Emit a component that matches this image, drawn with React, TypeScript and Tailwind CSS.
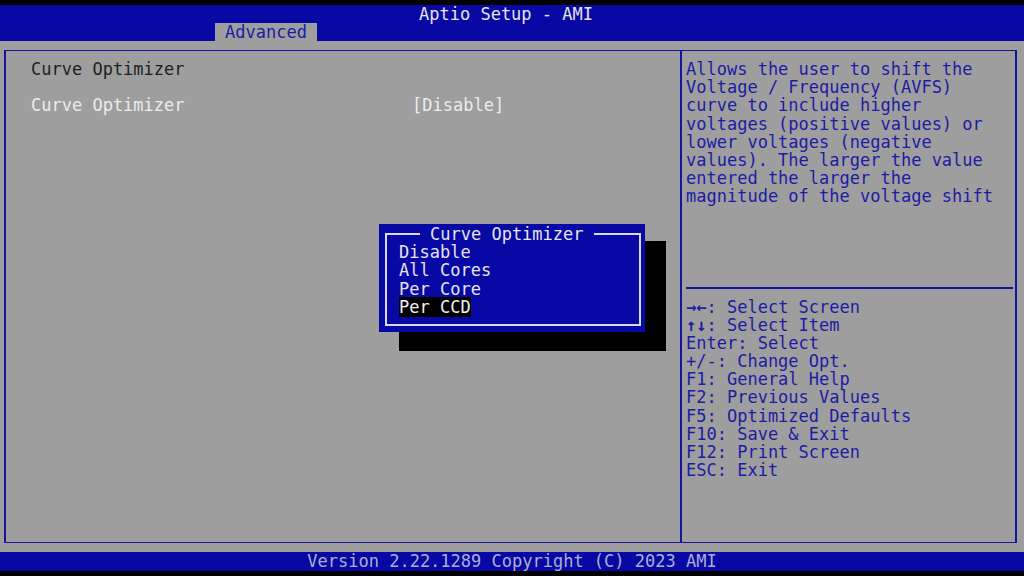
import React from "react";

const mono = { fontFamily: '"DejaVu Sans Mono", "Liberation Mono", monospace' };

const help = [
  "Allows the user to shift the",
  "Voltage / Frequency (AVFS)",
  "curve to include higher",
  "voltages (positive values) or",
  "lower voltages (negative",
  "values). The larger the value",
  "entered the larger the",
  "magnitude of the voltage shift",
];

const keys = [
  "Enter: Select",
  "+/-: Change Opt.",
  "F1: General Help",
  "F2: Previous Values",
  "F5: Optimized Defaults",
  "F10: Save & Exit",
  "F12: Print Screen",
  "ESC: Exit",
];

export default function App() {
  return (
    <div
      className="w-[1024px] h-[576px] bg-black flex flex-col overflow-hidden text-[17px] leading-[18.2px] relative"
      style={mono}
    >
      <div className="h-[5px] bg-black" />
      <div className="h-[36px] bg-[#0808a4] flex flex-col">
        <div className="h-[18px] flex justify-center pr-[12px] text-[#e4e4ec] leading-[18px]">
          Aptio Setup - AMI
        </div>
        <div className="flex-1 flex items-end pl-[215px]">
          <div className="w-[102px] h-[18px] bg-[#9e9e9e] text-[#1c1ca4] flex justify-center leading-[18px]">
            Advanced
          </div>
        </div>
      </div>
      <div className="flex-1 bg-[#9e9e9e] pt-[9px] pb-[9px] pl-[4px] pr-[7px] flex">
        <div className="flex-1 flex border-x-2 border-y border-[#1414a0]">
          <div className="w-[674px] pt-[9px] pl-[25px] pr-[4px] flex flex-col">
            <div className="text-[#1e1e1e] h-[18.2px]">Curve Optimizer</div>
            <div className="h-[18.2px]" />
            <div className="flex h-[18.2px] text-[#ececec]">
              <span className="w-[381px]">Curve Optimizer</span>
              <span>[Disable]</span>
            </div>
          </div>
          <div className="w-[2px] bg-[#1414a0]" />
          <div className="flex-1 pt-[9px] pl-[4px] pr-[2px] flex flex-col text-[#1c1ca4]">
            <div className="h-[226px] flex flex-col">
              {help.map((l) => (
                <div key={l} className="h-[18.2px] whitespace-pre">{l}</div>
              ))}
            </div>
            <div className="h-[1.5px] bg-[#1414a0] mt-[1px] mb-[9px]" />
            <div className="flex flex-col">
              <div className="h-[18.2px] whitespace-pre">
                <span className="font-bold">→←</span>: Select Screen
              </div>
              <div className="h-[18.2px] whitespace-pre">
                <span className="font-bold">↑↓</span>: Select Item
              </div>
              {keys.map((l) => (
                <div key={l} className="h-[18.2px] whitespace-pre">{l}</div>
              ))}
            </div>
          </div>
        </div>
      </div>
      <div className="h-[19px] bg-[#0808a4] text-[#aeaed2] flex justify-center items-center leading-[19px]">
        Version 2.22.1289 Copyright (C) 2023 AMI
      </div>
      <div className="h-[5px] bg-black" />

      {/* popup shadow */}
      <div className="absolute left-[399px] top-[241px] w-[267px] h-[110px] bg-black" />
      {/* popup */}
      <div className="absolute left-[379px] top-[224px] w-[266px] h-[108px] bg-[#0808a4] pt-[10px] pl-[6px] pr-[4px] pb-[6px] flex">
        <div className="flex-1 border-x-2 border-b-2 border-[#d8d8e8] relative flex flex-col">
          <div className="flex items-center -mt-[9px] h-[18.2px] text-[#e4e4ec]">
            <div className="w-[35px] h-[2px] bg-[#d8d8e8] -ml-[2px]" />
            <span className="px-[10px]">Curve Optimizer</span>
            <div className="flex-1 h-[2px] bg-[#d8d8e8] -mr-[2px]" />
          </div>
          <div className="pl-[12px] flex flex-col text-[#e4e4ec]">
            <div className="h-[18.2px]">Disable</div>
            <div className="h-[18.2px]">All Cores</div>
            <div className="h-[18.2px]">Per Core</div>
            <div className="h-[18.2px]">
              <span className="bg-black text-[#f0f0f0]">Per CCD</span>
            </div>
          </div>
        </div>
      </div>
    </div>
  );
}
